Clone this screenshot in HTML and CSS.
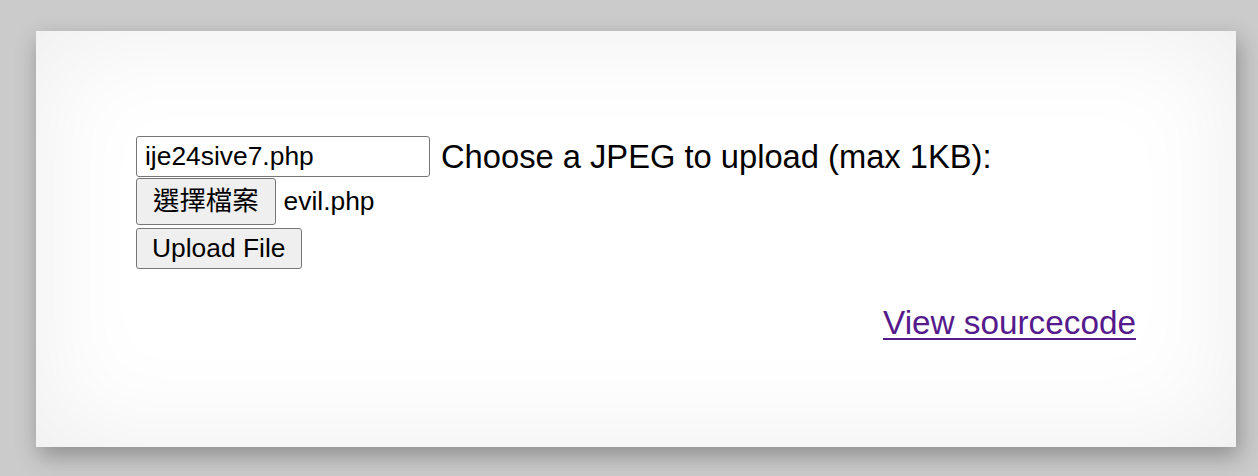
FILE: index.html
```html
<!DOCTYPE html>
<html lang="zh-Hant">
<head>
<meta charset="utf-8">
<title>Upload</title>
<link rel="stylesheet" href="styles.css">
</head>
<body>
<div class="page">
  <div class="card">
    <form class="upload-form">
      <div class="row row-name">
        <div class="text-input">ije24sive7.php</div>
        <span class="label">Choose a JPEG to upload (max 1KB):</span>
      </div>
      <div class="row row-file">
        <button type="button" class="btn btn-cjk">選擇檔案</button>
        <span class="file-name">evil.php</span>
      </div>
      <div class="row row-submit">
        <button type="button" class="btn">Upload File</button>
      </div>
    </form>
    <div class="source-link"><a href="#" class="link">View sourcecode</a></div>
  </div>
</div>
</body>
</html>
```

FILE: styles.css
```css
html, body {
  margin: 0;
  padding: 0;
  background: #cbcbcb;
}
html {
  min-height: 100%;
}
body {
  font-family: "Liberation Sans", Arial, sans-serif;
  color: #000;
  min-height: 476px;
}
.page {
  padding: 31px 0 29px 36px;
}
.card {
  width: 1000px;
  padding: 105px 100px;
  background: #ffffff;
  box-shadow: 3px 9px 22px rgba(0, 0, 0, 0.3), inset 0 0 110px rgba(0, 0, 0, 0.075);
}
.upload-form {
  display: flex;
  flex-direction: column;
  align-items: flex-start;
}
.row {
  display: flex;
  align-items: center;
}
.row-file {
  margin-top: 1px;
}
.row-submit {
  margin-top: 3px;
}
.text-input {
  box-sizing: border-box;
  width: 294px;
  height: 41px;
  border: 1px solid #767676;
  border-radius: 3px;
  padding: 0 8px;
  font-size: 26.4px;
  display: flex;
  align-items: center;
  background: #fff;
}
.label {
  font-size: 32.7px;
  margin-left: 11px;
}
.btn {
  box-sizing: border-box;
  height: 41px;
  padding: 0 15px;
  margin: 0;
  border: 1px solid #767676;
  border-radius: 3px;
  background: #efefef;
  color: #000;
  font-family: "Liberation Sans", Arial, sans-serif;
  font-size: 26.4px;
  line-height: 1;
}
.btn-cjk {
  height: 47px;
  padding: 0 16px;
  font-family: "Liberation Sans", "Noto Sans CJK TC", sans-serif;
}
.file-name {
  font-size: 26.4px;
  margin-left: 8px;
}
.source-link {
  margin-top: 35px;
  text-align: right;
  font-size: 33.3px;
}
.link {
  color: #551a8b;
  text-decoration: underline;
  text-decoration-thickness: 2px;
  text-underline-offset: 4px;
}
```
